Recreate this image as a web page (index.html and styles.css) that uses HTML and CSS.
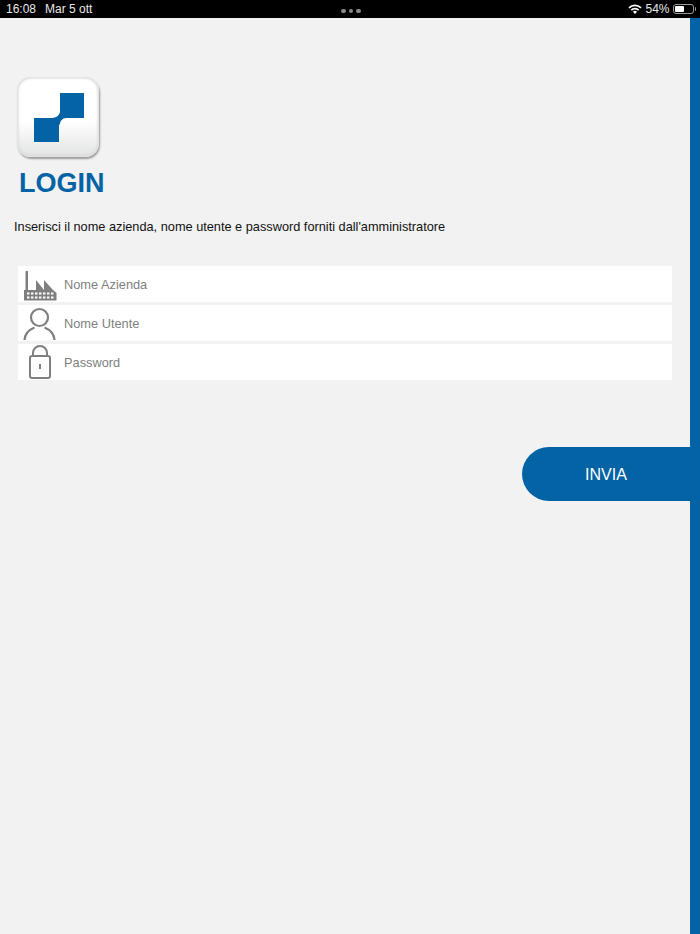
FILE: index.html
```html
<!DOCTYPE html>
<html lang="it">
<head>
<meta charset="utf-8">
<title>Login</title>
<link rel="stylesheet" href="styles.css">
</head>
<body>
<header class="status">
  <div class="status-left"><span>16:08</span><span>Mar 5 ott</span></div>
  <div class="dots"><i></i><i></i><i></i></div>
  <div class="status-right">
    <svg class="wifi" width="14" height="10" viewBox="0 0 14 10"><path d="M7 10 4.900 7.700a3 3 0 0 1 4.200 0Z" fill="#fff"/><path d="M3.300 6.200a5.300 5.300 0 0 1 7.400 0M1 3.800a8.600 8.600 0 0 1 12 0" fill="none" stroke="#fff" stroke-width="1.700"/></svg>
    <span>54%</span>
    <span class="battery"><span class="battery-fill"></span></span><span class="battery-tip"></span>
  </div>
</header>
<div class="app">
  <main class="main">
    <div class="logo">
      <svg width="50" height="49" viewBox="0 0 50 49"><path d="M26 0H50V25H32C29 25 26 28 26 31 25.500 31 25 32 25 33V49H0V25H18C22 25 25.500 22 26 19Z" fill="#0363a5"/></svg>
    </div>
    <h1 class="title">LOGIN</h1>
    <p class="intro">Inserisci il nome azienda, nome utente e password forniti dall'amministratore</p>
    <form class="form">
      <label class="field">
        <svg class="icon" width="34" height="34" viewBox="0 0 34 34"><path fill-rule="evenodd" fill="#7f7f7f" d="M2.500 4H5V23H13V13L21 23V13L30 23 33.500 26V33.500H1V23H2.500ZM4 25.500V27.500H6.500V25.500ZM8 25.500V27.500H10.500V25.500ZM12 25.500V27.500H14.500V25.500ZM16 25.500V27.500H18.500V25.500ZM20 25.500V27.500H22.500V25.500ZM24 25.500V27.500H26.500V25.500ZM28 25.500V27.500H30.500V25.500ZM4 29.500V31.500H6.500V29.500ZM8 29.500V31.500H10.500V29.500ZM12 29.500V31.500H14.500V29.500ZM16 29.500V31.500H18.500V29.500ZM20 29.500V31.500H22.500V29.500ZM24 29.500V31.500H26.500V29.500ZM28 29.500V31.500H30.500V29.500Z"/></svg>
        <input class="input" type="text" placeholder="Nome Azienda">
      </label>
      <label class="field">
        <svg class="icon" width="34" height="36" viewBox="0 0 34 36"><circle cx="16.500" cy="12.500" r="8.500" fill="none" stroke="#7f7f7f" stroke-width="2.200"/><path d="M1.500 35C2 28.500 6.500 24.500 11.500 22.500M31.500 35C31 28.500 26.500 24.500 21.500 22.500" fill="none" stroke="#7f7f7f" stroke-width="2.200"/></svg>
        <input class="input" type="text" placeholder="Nome Utente">
      </label>
      <label class="field">
        <svg class="icon" width="34" height="36" viewBox="0 0 34 36"><rect x="7" y="12" width="20" height="22" rx="2" fill="none" stroke="#7f7f7f" stroke-width="2"/><path d="M10 12V9a7 7 0 0 1 14 0v3" fill="none" stroke="#7f7f7f" stroke-width="2"/><rect x="16" y="20" width="2" height="5" fill="#7f7f7f"/></svg>
        <input class="input" type="password" placeholder="Password">
      </label>
    </form>
    <div class="actions"><button class="send" type="button">INVIA</button></div>
  </main>
  <aside class="rail"></aside>
</div>
</body>
</html>
```

FILE: styles.css
```css
* { box-sizing: border-box; }
html, body { margin: 0; height: 100%; }
body {
  display: flex;
  flex-direction: column;
  height: 934px;
  overflow: hidden;
  background: #f2f2f2;
  font-family: "Liberation Sans", Arial, sans-serif;
  color: #111;
}
.status {
  height: 18px;
  flex: none;
  background: #000;
  color: #e8e8e8;
  font-size: 12px;
  display: grid;
  grid-template-columns: 1fr auto 1fr;
  align-items: center;
  padding: 0 4px 0 6px;
}
.status-left { display: flex; gap: 9px; }
.dots { display: flex; gap: 3px; padding-top: 4px; }
.dots i { width: 4.500px; height: 4.500px; border-radius: 50%; background: #8a8a8a; }
.status-right { display: flex; justify-content: flex-end; align-items: center; }
.wifi { margin-right: 3px; }
.battery {
  display: block; width: 21px; height: 10px; margin-left: 3px;
  border: 1px solid #999; border-radius: 3px; padding: 1px;
}
.battery-fill { display: block; width: 54%; height: 100%; background: #fff; border-radius: 1px; }
.battery-tip { width: 1.500px; height: 4px; background: #999; border-radius: 0 1px 1px 0; margin-left: 1px; }
.app { flex: 1; display: flex; min-height: 0; }
.main { flex: 1; padding: 59px 18px 0 0; min-width: 0; }
.rail { width: 10px; flex: none; background: #0363a5; }
.logo {
  width: 82px; height: 80px; margin-left: 17px; padding-left: 2px;
  border-radius: 14px;
  background: linear-gradient(#fff 55%, #e2e3e3);
  box-shadow: inset 0 0 0 1px #e4e4e4, inset 0 0 3px 1px #cfcfcf, 1px 2px 2px #9a9a9a;
  display: flex; align-items: center; justify-content: center;
}
.title {
  margin: 10px 0 0 19px;
  font-size: 27px; line-height: 32px; font-weight: 700;
  color: #0363a5;
}
.intro { margin: 19px 0 0 14px; font-size: 12.750px; line-height: 18px; color: #111; }
.form { margin: 30px 0 0 18px; display: flex; flex-direction: column; gap: 3px; }
.field {
  height: 36px; background: #fff;
  display: flex; align-items: center;
}
.icon { flex: none; margin-left: 5px; }
.input {
  flex: 1; border: 0; outline: 0; background: transparent; padding: 0;
  margin-left: 7px; font: 12.800px "Liberation Sans", Arial, sans-serif; color: #111; min-width: 0;
}
.input::placeholder { color: #808080; opacity: 1; }
.actions { display: flex; justify-content: flex-end; margin-top: 67px; margin-right: -18px; }
.send {
  width: 168px; height: 54px; border: 0; padding: 1px 0 0;
  border-radius: 27px 0 0 27px;
  background: #0363a5; color: #fff;
  font: 16px "Liberation Sans", Arial, sans-serif;
}
```
